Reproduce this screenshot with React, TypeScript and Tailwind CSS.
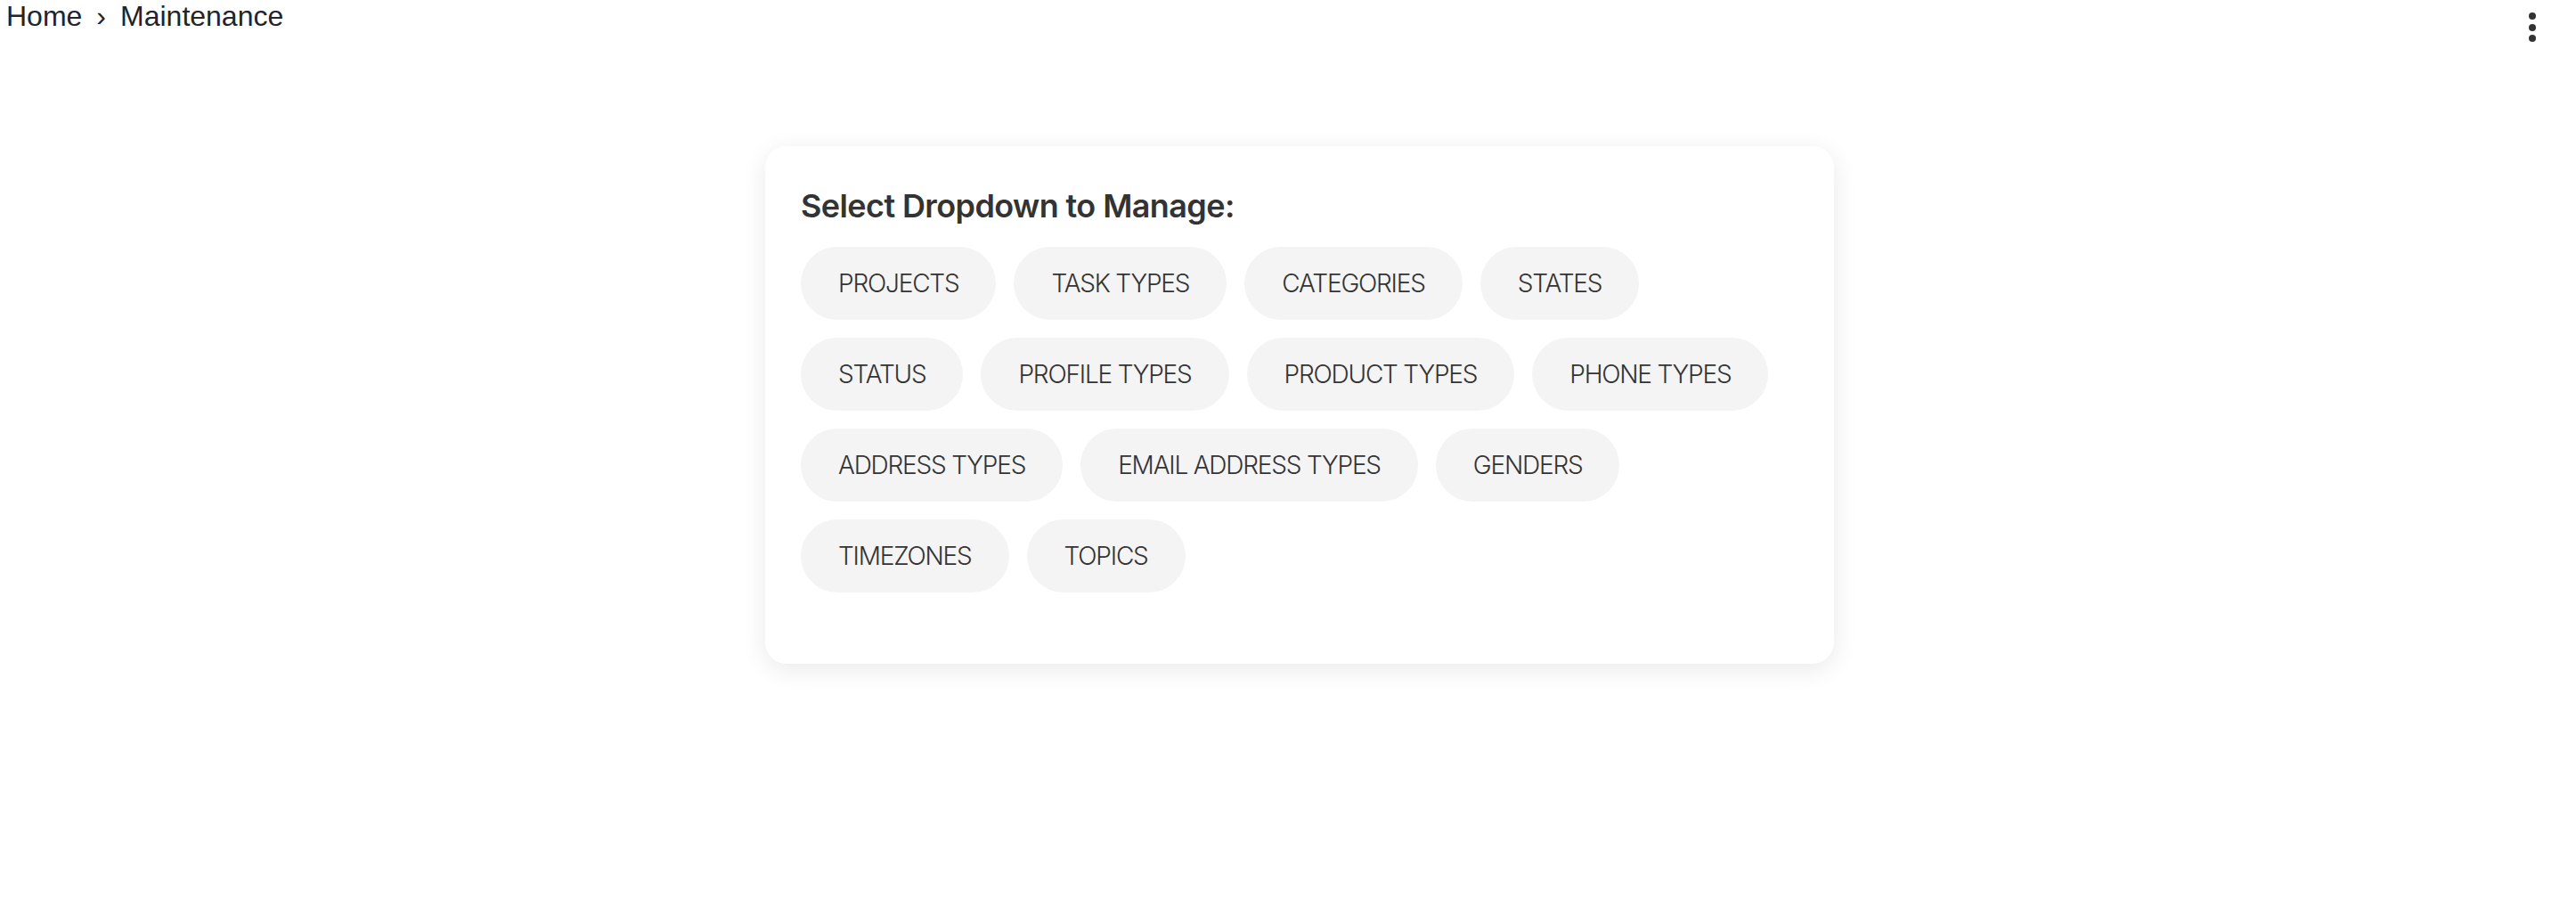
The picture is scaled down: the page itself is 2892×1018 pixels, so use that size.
import React from 'react';

const dropdowns = [
  'PROJECTS',
  'TASK TYPES',
  'CATEGORIES',
  'STATES',
  'STATUS',
  'PROFILE TYPES',
  'PRODUCT TYPES',
  'PHONE TYPES',
  'ADDRESS TYPES',
  'EMAIL ADDRESS TYPES',
  'GENDERS',
  'TIMEZONES',
  'TOPICS',
];

const rows = [
  dropdowns.slice(0, 4),
  dropdowns.slice(4, 8),
  dropdowns.slice(8, 11),
  dropdowns.slice(11),
];

const Maintenance: React.FC = () => {
  return (
    <div className="min-h-screen bg-white">
      <div className="flex justify-between items-start">
        <nav className="flex items-center gap-[16px] pl-[7px] text-[32px] leading-[37px] text-[#212529] font-['Liberation_Sans',Arial,sans-serif]">
          <span>Home</span>
          <span>›</span>
          <span>Maintenance</span>
        </nav>
        <button className="flex flex-col gap-[4.5px] pt-[14px] pr-[45px]" aria-label="More">
          <span className="w-2 h-2 rounded-full bg-[#333]" />
          <span className="w-2 h-2 rounded-full bg-[#333]" />
          <span className="w-2 h-2 rounded-full bg-[#333]" />
        </button>
      </div>

      <div className="flex justify-center pl-[26px] mt-[117px]">
        <div className="w-[1200px] bg-white rounded-[24px] shadow-[0_6px_28px_rgba(0,0,0,0.09)] px-[40px] pt-[45px] pb-[80px] font-['Inter',sans-serif]">
          <h3 className="text-[36px] leading-[44px] font-semibold tracking-[-0.6px] text-[#333] mb-[24px]">Select Dropdown to Manage:</h3>
          <div className="flex flex-col gap-[20px]">
            {rows.map((row, i) => (
              <div key={i} className="flex gap-[20px]">
                {row.map((name) => (
                  <button
                    key={name}
                    className="h-[82px] px-[42px] rounded-full bg-[#f4f4f4] text-[28px] font-light tracking-[-1.2px] text-[#333] whitespace-nowrap"
                  >
                    {name}
                  </button>
                ))}
              </div>
            ))}
          </div>
        </div>
      </div>
    </div>
  );
};

export default Maintenance;
